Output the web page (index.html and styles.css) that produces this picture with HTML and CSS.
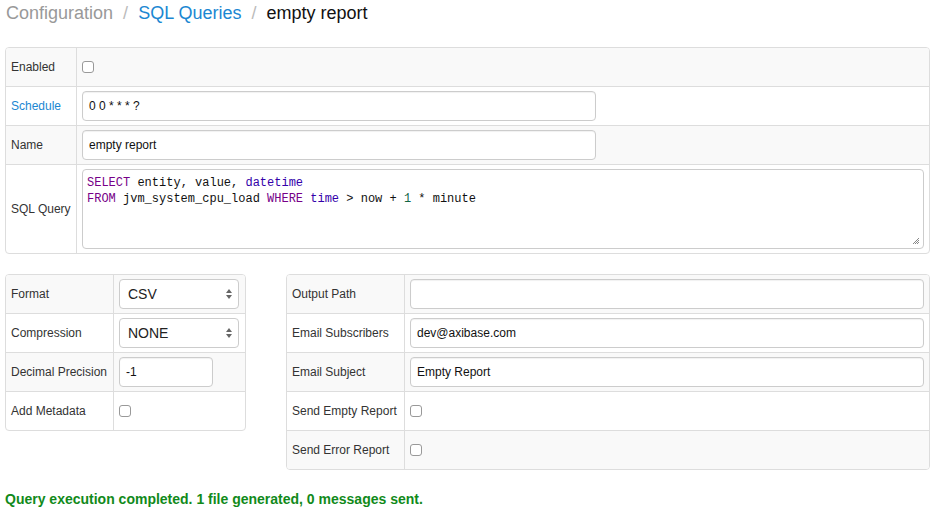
FILE: index.html
```html
<!DOCTYPE html>
<html>
<head>
<meta charset="utf-8">
<link rel="stylesheet" href="styles.css">
</head>
<body>
<div class="page">
  <div class="crumbs">
    <span class="crumb-muted">Configuration</span>
    <span class="sep">/</span>
    <a class="crumb-link">SQL Queries</a>
    <span class="sep">/</span>
    <span class="crumb-cur">empty report</span>
  </div>

  <table class="grid top">
    <tr class="odd">
      <td class="lbl">Enabled</td>
      <td class="val"><span class="cb"></span></td>
    </tr>
    <tr>
      <td class="lbl"><a class="link">Schedule</a></td>
      <td class="val"><div class="inp w-mid">0 0 * * * ?</div></td>
    </tr>
    <tr class="odd">
      <td class="lbl">Name</td>
      <td class="val"><div class="inp w-mid">empty report</div></td>
    </tr>
    <tr>
      <td class="lbl">SQL Query</td>
      <td class="val">
        <div class="code">
          <div><span class="kw">SELECT</span> entity, value, <span class="bi">datetime</span></div>
          <div><span class="kw">FROM</span> jvm_system_cpu_load <span class="kw">WHERE</span> <span class="bi">time</span> &gt; now + <span class="num">1</span> * minute</div>
          <svg class="grip" width="8" height="8" viewBox="0 0 8 8"><path d="M7 1L1 7M7 3L3 7M7 5L5 7" stroke="#888" stroke-width="1"/></svg>
        </div>
      </td>
    </tr>
  </table>

  <div class="lower">
    <table class="grid left">
      <tr class="odd">
        <td class="lbl">Format</td>
        <td class="val"><div class="sel">CSV<span class="arrows"></span></div></td>
      </tr>
      <tr>
        <td class="lbl">Compression</td>
        <td class="val"><div class="sel">NONE<span class="arrows"></span></div></td>
      </tr>
      <tr class="odd">
        <td class="lbl">Decimal Precision</td>
        <td class="val"><div class="inp w-small">-1</div></td>
      </tr>
      <tr>
        <td class="lbl">Add Metadata</td>
        <td class="val"><span class="cb"></span></td>
      </tr>
    </table>

    <table class="grid right">
      <tr class="odd">
        <td class="lbl">Output Path</td>
        <td class="val"><div class="inp"></div></td>
      </tr>
      <tr>
        <td class="lbl">Email Subscribers</td>
        <td class="val"><div class="inp">dev@axibase.com</div></td>
      </tr>
      <tr class="odd">
        <td class="lbl">Email Subject</td>
        <td class="val"><div class="inp">Empty Report</div></td>
      </tr>
      <tr>
        <td class="lbl">Send Empty Report</td>
        <td class="val"><span class="cb"></span></td>
      </tr>
      <tr class="odd">
        <td class="lbl">Send Error Report</td>
        <td class="val"><span class="cb"></span></td>
      </tr>
    </table>
  </div>

  <div class="status">Query execution completed. 1 file generated, 0 messages sent.</div>
</div>
</body>
</html>
```

FILE: styles.css
```css
* { box-sizing: border-box; }
body {
  margin: 0;
  background: #fff;
  font-family: "Liberation Sans", Arial, sans-serif;
  color: #333;
}
.page {
  padding: 0 6px 0 5px;
}
.crumbs {
  font-size: 18px;
  line-height: 24px;
  padding: 1px 0 0 1px;
  height: 47px;
}
.crumb-muted { color: #999; }
.crumb-link { color: #1b87d2; }
.crumb-cur { color: #111; }
.sep { color: #bbb; margin: 0 5px; }

.grid {
  border-collapse: separate;
  border-spacing: 0;
  border: 1px solid #ddd;
  border-radius: 4px;
  font-size: 12px;
}
.grid td {
  border-top: 1px solid #ddd;
  height: 39px;
  padding: 4px 5px;
  vertical-align: middle;
}
.grid tr:first-child td { border-top: none; height: 38px; }
.grid td + td { border-left: 1px solid #ddd; }
.grid tr.odd td { background: #f9f9f9; }
.grid tr:first-child td:first-child { border-top-left-radius: 3px; }
.grid tr:first-child td:last-child { border-top-right-radius: 3px; }
.grid tr:last-child td:first-child { border-bottom-left-radius: 3px; }
.grid tr:last-child td:last-child { border-bottom-right-radius: 3px; }

.lbl { color: #333; white-space: nowrap; }
.link { color: #1b87d2; }

.top { width: 925px; }
.top .lbl { width: 70px; }

.inp {
  height: 30px;
  border: 1px solid #ccc;
  border-radius: 4px;
  background: #fff;
  padding: 0 6px;
  line-height: 28px;
  font-size: 12px;
  color: #111;
  box-shadow: inset 0 1px 1px rgba(0,0,0,.06);
}
.w-mid { width: 514px; }
.w-small { width: 94px; }

.cb {
  display: block;
  width: 12px;
  height: 12px;
  border: 1px solid #999;
  border-radius: 3px;
  background: #fff;
}

.code {
  position: relative;
  height: 80px;
  border: 1px solid #ccc;
  border-radius: 4px;
  background: #fff;
  padding: 5px 4px 4px;
  font-family: "Liberation Mono", "Courier New", monospace;
  font-size: 12px;
  line-height: 16px;
  color: #111;
}
.kw { color: #770088; }
.bi { color: #3300aa; }
.num { color: #116644; }
.grip { position: absolute; right: 3px; bottom: 3px; }

.lower {
  display: flex;
  align-items: flex-start;
  gap: 40px;
  margin-top: 20px;
}
.left { width: 241px; }
.left .lbl { width: 107px; }
.right { width: 644px; }
.right .lbl { width: 117px; }

.sel {
  position: relative;
  width: 120px;
  height: 30px;
  border: 1px solid #ccc;
  border-radius: 4px;
  background: #fff;
  padding: 0 8px;
  line-height: 28px;
  font-size: 14px;
  color: #222;
}
.arrows {
  position: absolute;
  right: 5px;
  top: 9px;
  width: 7px;
  height: 10px;
}
.arrows::before, .arrows::after {
  content: "";
  position: absolute;
  left: 0;
  border-left: 3.5px solid transparent;
  border-right: 3.5px solid transparent;
}
.arrows::before { top: 0; border-bottom: 4px solid #666; }
.arrows::after { bottom: 0; border-top: 4px solid #666; }

.status {
  margin-top: 21px;
  color: #118a1a;
  font-weight: bold;
  font-size: 14px;
}
```
